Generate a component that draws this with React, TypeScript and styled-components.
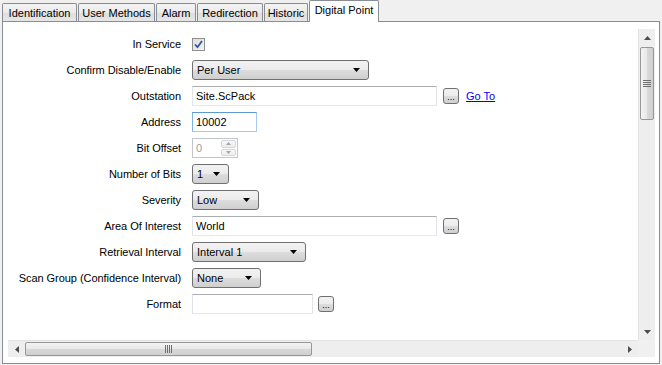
import styled, { createGlobalStyle } from 'styled-components';

const GlobalStyle = createGlobalStyle`
  html, body {
    margin: 0;
    padding: 0;
    background: #f0f0f0;
  }
  body {
    font-family: "Liberation Sans", Arial, sans-serif;
    font-size: 11px;
    color: #000;
  }
`;

const Window = styled.div`
  width: 662px;
  height: 365px;
  box-sizing: border-box;
  padding: 0 2px 1px 2px;
  display: flex;
  flex-direction: column;
  overflow: hidden;
`;

const TabStrip = styled.div`
  display: flex;
  align-items: flex-end;
  height: 21px;
  position: relative;
  z-index: 1;
`;

const Tab = styled.div<{ $w: number; $active?: boolean }>`
  width: ${p => p.$w}px;
  height: ${p => (p.$active ? 22 : 18)}px;
  margin-right: 1px;
  margin-bottom: ${p => (p.$active ? -1 : 0)}px;
  box-sizing: border-box;
  border: 1px solid #898c95;
  border-bottom: none;
  border-radius: 2px 2px 0 0;
  background: ${p =>
    p.$active ? '#ffffff' : 'linear-gradient(#f3f3f3 0%, #ebebeb 50%, #dedede 51%, #e6e6e6 100%)'};
  display: flex;
  align-items: center;
  justify-content: center;
  padding-bottom: ${p => (p.$active ? 3 : 0)}px;
  white-space: nowrap;
`;

const Panel = styled.div`
  flex: 1;
  box-sizing: border-box;
  border: 1px solid #898c95;
  background: #ffffff;
  padding: 7px 4px 6px 5px;
  display: grid;
  grid-template-columns: 1fr 17px;
  grid-template-rows: 1fr 17px;
  min-height: 0;
`;

const Viewport = styled.div`
  overflow: hidden;
  min-height: 0;
`;

const Form = styled.div`
  display: grid;
  grid-template-columns: 173px auto;
  grid-auto-rows: 26px;
  column-gap: 11px;
  padding-top: 2px;
  align-items: center;
`;

const Label = styled.div`
  text-align: right;
  white-space: nowrap;
  letter-spacing: -0.05px;
`;

const Cell = styled.div<{ $gap?: number }>`
  display: flex;
  align-items: center;
  gap: ${p => p.$gap ?? 6}px;
`;

const TextBox = styled.div<{ $w: number; $focused?: boolean }>`
  width: ${p => p.$w}px;
  height: 20px;
  box-sizing: border-box;
  border: 1px solid;
  border-color: ${p =>
    p.$focused ? '#5c9ad3 #a9cbeb #a9cbeb #7fb2e0' : '#abadb3 #e2e3ea #e3e9ef #e2e3ea'};
  background: #fff;
  padding: 0 3px;
  line-height: 18px;
  white-space: nowrap;
`;

const Spin = styled.div<{ $w: number }>`
  width: ${p => p.$w}px;
  height: 20px;
  box-sizing: border-box;
  border: 1px solid #c2c5c9;
  background: #fff;
  display: flex;
  color: #a0a0a0;
  line-height: 18px;
`;

const SpinValue = styled.div`
  flex: 1;
  padding-left: 3px;
`;

const SpinButtons = styled.div`
  width: 15px;
  display: flex;
  flex-direction: column;
  gap: 1px;
  padding: 1px 1px 1px 0;
`;

const SpinButton = styled.div`
  flex: 1;
  border: 1px solid #d5d7da;
  border-radius: 2px;
  background: linear-gradient(#f7f7f7, #ededed);
  display: flex;
  align-items: center;
  justify-content: center;
`;

const Combo = styled.div<{ $w: number }>`
  width: ${p => p.$w}px;
  height: 20px;
  box-sizing: border-box;
  border: 1px solid #707070;
  border-radius: 3px;
  background: linear-gradient(#f2f2f2 0%, #ebebeb 50%, #dddddd 51%, #cfcfcf 100%);
  display: flex;
  align-items: center;
  justify-content: space-between;
  padding: 0 8px 0 4px;
  white-space: nowrap;
`;

const DotsButton = styled.div`
  width: 16px;
  height: 16px;
  box-sizing: border-box;
  border: 1px solid #707070;
  border-radius: 3px;
  background: linear-gradient(#f2f2f2 0%, #ebebeb 50%, #dddddd 51%, #cfcfcf 100%);
  display: flex;
  align-items: flex-end;
  justify-content: center;
  font-size: 9px;
  line-height: 10px;
  padding-bottom: 1px;
`;

const LinkText = styled.span`
  color: #0000ff;
  text-decoration: underline;
  margin-left: 1px;
`;

const CheckBox = styled.div`
  width: 13px;
  height: 13px;
  box-sizing: border-box;
  border: 1px solid #8e8f8f;
  background: linear-gradient(135deg, #dcdcdc, #f4f4f4);
  padding: 1px;
  display: flex;
`;

const VScroll = styled.div`
  display: flex;
  flex-direction: column;
  background: #eeeeee;
  border-left: 1px solid #e3e3e3;
  box-sizing: border-box;
`;

const HScroll = styled.div`
  display: flex;
  background: #eeeeee;
  border-top: 1px solid #e3e3e3;
  box-sizing: border-box;
`;

const ArrowBox = styled.div<{ $h?: boolean }>`
  width: ${p => (p.$h ? '17px' : 'auto')};
  height: ${p => (p.$h ? 'auto' : '17px')};
  flex: none;
  display: flex;
  align-items: center;
  justify-content: center;
`;

const VThumb = styled.div`
  height: 73px;
  margin: 1px 1px 0 1px;
  flex: none;
  box-sizing: border-box;
  border: 1px solid #979797;
  border-radius: 2px;
  background: linear-gradient(90deg, #f3f3f3 0%, #e8e8e8 50%, #d9d9d9 51%, #cfcfcf 100%);
  display: flex;
  align-items: center;
  justify-content: center;
`;

const HThumb = styled.div`
  width: 287px;
  margin: 1px 0 1px 0;
  flex: none;
  box-sizing: border-box;
  border: 1px solid #979797;
  border-radius: 2px;
  background: linear-gradient(#f3f3f3 0%, #e8e8e8 50%, #d9d9d9 51%, #cfcfcf 100%);
  display: flex;
  align-items: center;
  justify-content: center;
`;

const Spacer = styled.div`
  flex: 1;
`;

const Corner = styled.div`
  background: #f0f0f0;
`;

type Dir = 'up' | 'down' | 'left' | 'right';

function Arrow({ dir, color = '#4d4d4d', size = 7 }: { dir: Dir; color?: string; size?: number }) {
  const h = Math.ceil(size / 2);
  const pts: Record<Dir, string> = {
    up: `0,${h} ${size / 2},0 ${size},${h}`,
    down: `0,0 ${size},0 ${size / 2},${h}`,
    left: `${h},0 0,${size / 2} ${h},${size}`,
    right: `0,0 ${h},${size / 2} 0,${size}`,
  };
  const vertical = dir === 'up' || dir === 'down';
  return (
    <svg width={vertical ? size : h} height={vertical ? h : size} style={{ display: 'block' }}>
      <polygon points={pts[dir]} fill={color} />
    </svg>
  );
}

function Grip({ horizontal }: { horizontal?: boolean }) {
  const lines = [0, 2, 4, 6];
  return horizontal ? (
    <svg width={7} height={8} style={{ display: 'block' }}>
      {lines.map(x => (
        <rect key={x} x={x} y={0} width={1} height={8} fill="#6f6f6f" />
      ))}
    </svg>
  ) : (
    <svg width={8} height={7} style={{ display: 'block' }}>
      {lines.map(y => (
        <rect key={y} x={0} y={y} width={8} height={1} fill="#6f6f6f" />
      ))}
    </svg>
  );
}

function Check() {
  return (
    <svg width={9} height={9} viewBox="0 0 9 9" style={{ display: 'block' }}>
      <path d="M1 4.5 L3.5 7.2 L8 1" stroke="#34539a" strokeWidth={1.8} fill="none" />
    </svg>
  );
}

const tabs = [
  { name: 'Identification', w: 75 },
  { name: 'User Methods', w: 77 },
  { name: 'Alarm', w: 40 },
  { name: 'Redirection', w: 66 },
  { name: 'Historic', w: 44 },
  { name: 'Digital Point', w: 70, active: true },
];

export default function App() {
  return (
    <>
      <GlobalStyle />
      <Window>
        <TabStrip>
          {tabs.map(t => (
            <Tab key={t.name} $w={t.w} $active={t.active}>
              {t.name}
            </Tab>
          ))}
        </TabStrip>
        <Panel>
          <Viewport>
            <Form>
              <Label>In Service</Label>
              <Cell>
                <CheckBox>
                  <Check />
                </CheckBox>
              </Cell>

              <Label>Confirm Disable/Enable</Label>
              <Cell>
                <Combo $w={177}>
                  Per User
                  <Arrow dir="down" color="#000" />
                </Combo>
              </Cell>

              <Label>Outstation</Label>
              <Cell>
                <TextBox $w={245}>Site.ScPack</TextBox>
                <DotsButton>...</DotsButton>
                <LinkText>Go To</LinkText>
              </Cell>

              <Label>Address</Label>
              <Cell>
                <TextBox $w={65} $focused>
                  10002
                </TextBox>
              </Cell>

              <Label>Bit Offset</Label>
              <Cell>
                <Spin $w={46}>
                  <SpinValue>0</SpinValue>
                  <SpinButtons>
                    <SpinButton>
                      <Arrow dir="up" color="#a6a6a6" size={5} />
                    </SpinButton>
                    <SpinButton>
                      <Arrow dir="down" color="#a6a6a6" size={5} />
                    </SpinButton>
                  </SpinButtons>
                </Spin>
              </Cell>

              <Label>Number of Bits</Label>
              <Cell>
                <Combo $w={37}>
                  1
                  <Arrow dir="down" color="#000" />
                </Combo>
              </Cell>

              <Label>Severity</Label>
              <Cell>
                <Combo $w={67}>
                  Low
                  <Arrow dir="down" color="#000" />
                </Combo>
              </Cell>

              <Label>Area Of Interest</Label>
              <Cell>
                <TextBox $w={245}>World</TextBox>
                <DotsButton>...</DotsButton>
              </Cell>

              <Label>Retrieval Interval</Label>
              <Cell>
                <Combo $w={114}>
                  Interval 1
                  <Arrow dir="down" color="#000" />
                </Combo>
              </Cell>

              <Label>Scan Group (Confidence Interval)</Label>
              <Cell>
                <Combo $w={69}>
                  None
                  <Arrow dir="down" color="#000" />
                </Combo>
              </Cell>

              <Label>Format</Label>
              <Cell $gap={5}>
                <TextBox $w={121} />
                <DotsButton>...</DotsButton>
              </Cell>
            </Form>
          </Viewport>

          <VScroll>
            <ArrowBox>
              <Arrow dir="up" />
            </ArrowBox>
            <VThumb>
              <Grip />
            </VThumb>
            <Spacer />
            <ArrowBox>
              <Arrow dir="down" />
            </ArrowBox>
          </VScroll>

          <HScroll>
            <ArrowBox $h>
              <Arrow dir="left" />
            </ArrowBox>
            <HThumb>
              <Grip horizontal />
            </HThumb>
            <Spacer />
            <ArrowBox $h>
              <Arrow dir="right" />
            </ArrowBox>
          </HScroll>

          <Corner />
        </Panel>
      </Window>
    </>
  );
}
